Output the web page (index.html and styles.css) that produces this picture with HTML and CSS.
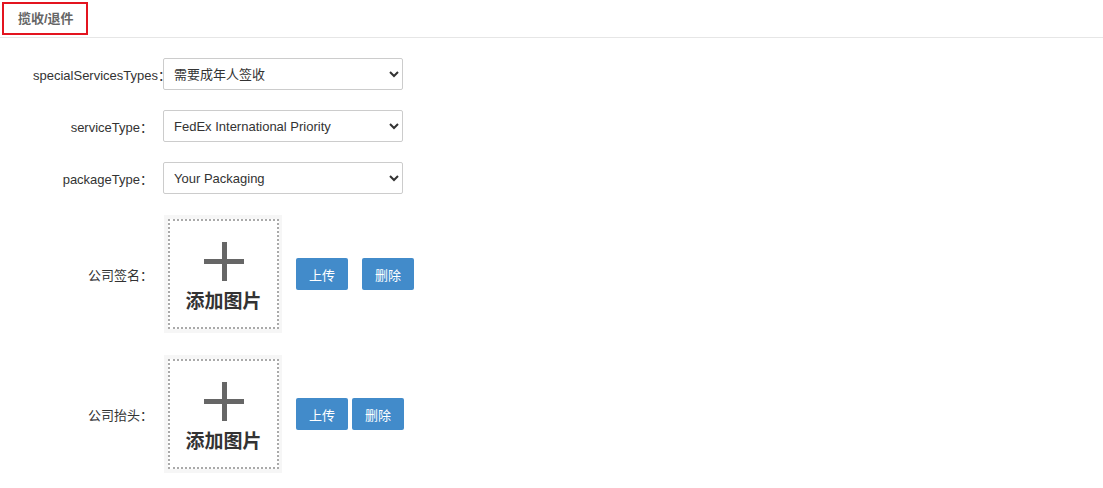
FILE: index.html
```html
<!DOCTYPE html>
<html lang="zh-CN">

<head>
  <meta charset="UTF-8" />
  <meta name="viewport" content="width=device-width, initial-scale=1.0" />
  <title>揽收/退件</title>
  <link rel="stylesheet" href="styles.css">
</head>

<body>
  <div class="tabs">
    <div class="tab">揽收/退件</div>
  </div>

  <div class="form">
    <div class="row">
      <label class="label">specialServicesTypes：</label>
      <select class="select">
        <option>需要成年人签收</option>
      </select>
    </div>

    <div class="row">
      <label class="label">serviceType：</label>
      <select class="select">
        <option>FedEx International Priority</option>
      </select>
    </div>

    <div class="row">
      <label class="label">packageType：</label>
      <select class="select">
        <option>Your Packaging</option>
      </select>
    </div>

    <div class="row row-pic">
      <label class="label">公司签名：</label>
      <div class="pic">
        <div class="pic-inner">
          <span class="plus"></span>
          <span class="pic-text">添加图片</span>
        </div>
      </div>
      <button class="btn">上传</button>
      <button class="btn btn-far">删除</button>
    </div>

    <div class="row row-pic">
      <label class="label">公司抬头：</label>
      <div class="pic">
        <div class="pic-inner">
          <span class="plus"></span>
          <span class="pic-text">添加图片</span>
        </div>
      </div>
      <button class="btn">上传</button>
      <button class="btn">删除</button>
    </div>
  </div>
</body>

</html>
```

FILE: styles.css
```css
body {
  margin: 0;
  font-family: "Liberation Sans", Arial, "Noto Sans CJK SC", sans-serif;
  font-size: 13px;
  color: #333;
  background-color: #fff;
}

.tabs {
  height: 38px;
  border-bottom: 1px solid #e6e6e6;
  padding: 2px 0 0 2px;
  box-sizing: border-box;
}

.tab {
  display: inline-block;
  height: 33px;
  line-height: 29px;
  padding: 0 12px 0 14px;
  box-sizing: border-box;
  border: 2px solid #e3141f;
  font-weight: bold;
  color: #666;
}

.form {
  padding-top: 20px;
}

.row {
  display: flex;
  align-items: center;
  margin-bottom: 20px;
}

.row-pic {
  margin-top: 21px;
  margin-bottom: 22px;
}

.row-pic + .row-pic {
  margin-top: 0;
}

.label {
  width: 163px;
  min-width: 0;
  padding: 0 10px 0 33px;
  box-sizing: border-box;
  text-align: right;
  white-space: nowrap;
  flex-shrink: 0;
}

.select {
  width: 240px;
  height: 32px;
  padding: 0 6px;
  border: 1px solid #ccc;
  border-radius: 2px;
  background-color: #fff;
  font-family: "Liberation Sans", Arial, "Noto Sans CJK SC", sans-serif;
  font-size: 13px;
  color: #333;
}

.pic {
  width: 118px;
  height: 118px;
  margin-left: 1px;
  padding: 4px 3px 4px 4px;
  box-sizing: border-box;
  background-color: #f6f6f6;
}

.pic-inner {
  height: 100%;
  border: 2px dotted #aaa;
  box-sizing: border-box;
  background-color: #fff;
  display: flex;
  flex-direction: column;
  align-items: center;
  padding-top: 21px;
}

.plus {
  position: relative;
  width: 40px;
  height: 39px;
}

.plus::before,
.plus::after {
  content: "";
  position: absolute;
  background-color: #666;
}

.plus::before {
  left: 0;
  top: 17px;
  width: 40px;
  height: 5px;
}

.plus::after {
  left: 18px;
  top: 0;
  width: 5px;
  height: 39px;
}

.pic-text {
  margin-top: 5px;
  font-size: 19px;
  font-weight: bold;
  color: #333;
}

.btn {
  width: 52px;
  height: 32px;
  margin-left: 14px;
  border: none;
  border-radius: 2px;
  background-color: #428bca;
  color: #fff;
  font-family: "Liberation Sans", Arial, "Noto Sans CJK SC", sans-serif;
  font-size: 13px;
}

.btn + .btn {
  margin-left: 4px;
}

.btn + .btn-far {
  margin-left: 14px;
}
```
